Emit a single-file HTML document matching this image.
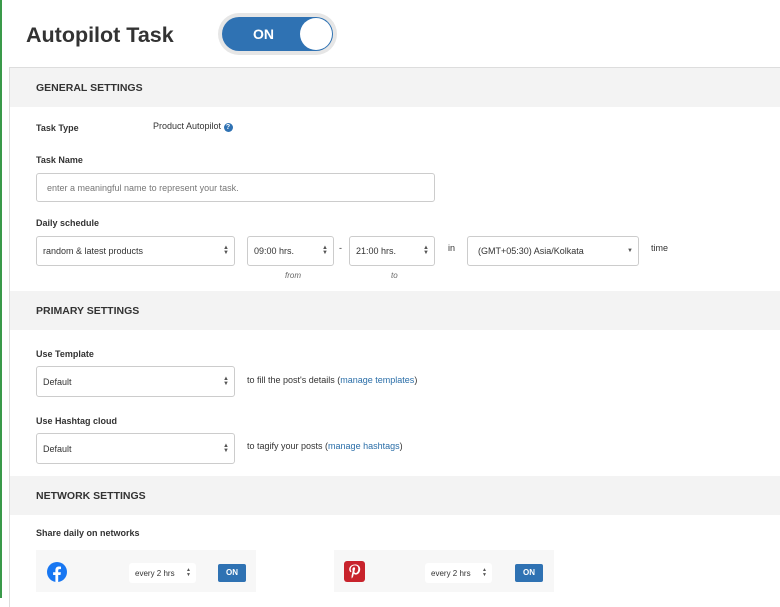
<!DOCTYPE html>
<html><head><style>
*{margin:0;padding:0;box-sizing:border-box}
body{width:780px;height:598px;background:#fff;font-family:"Liberation Sans",sans-serif;color:#333;position:relative;overflow:hidden}
.a{position:absolute}
.green{left:0;top:0;width:2px;height:598px;background:#3a9a4a}
h1{position:absolute;left:26px;top:23px;font-size:21.5px;font-weight:bold;color:#333}
.tog{left:218px;top:13px;width:119px;height:42px;border-radius:21px;background:#e6e6e6}
.tog .in{position:absolute;left:4px;top:4px;width:111px;height:34px;border-radius:17px;background:#2f72b3}
.tog .k{position:absolute;right:1px;top:1px;width:32px;height:32px;border-radius:16px;background:#fff}
.tog span{position:absolute;left:31px;top:9px;color:#fff;font-weight:bold;font-size:14px}
.panel{left:9px;top:67px;width:780px;height:540px;border-left:1px solid #ddd;border-top:1px solid #ddd}
.sh{left:10px;width:770px;height:39px;background:#f3f3f3;font-size:10.5px;font-weight:bold;color:#333;padding:14px 0 0 26px}
.lb{font-size:9px;font-weight:bold;color:#333}
.tx{font-size:9px;color:#333}
.box{border:1px solid #ccc;border-radius:3px;background:#fff;font-size:9px;color:#333;padding-left:6px;display:flex;align-items:center}
.box .ar{position:absolute;right:5px;top:50%;margin-top:-5px;font-size:6px;line-height:5px;color:#555}
a{color:#2a6ea8;text-decoration:none}
.it{font-size:8px;font-style:italic;color:#666}
.net{height:42px;background:#f7f7f7}
.on{background:#2f72b3;color:#fff;font-size:8px;font-weight:bold;border-radius:2px;text-align:center;line-height:18px;width:28px;height:18px}
</style></head><body>
<div class="a green"></div>
<h1>Autopilot Task</h1>
<div class="a tog"><div class="in"><span>ON</span><div class="k"></div></div></div>
<div class="a panel"></div>
<div class="a sh" style="top:68px">GENERAL SETTINGS</div>
<div class="a lb" style="left:36px;top:123px">Task Type</div>
<div class="a tx" style="left:153px;top:121px">Product Autopilot <span style="display:inline-block;width:9px;height:9px;border-radius:50%;background:#2f72b3;color:#fff;font-size:7px;text-align:center;line-height:9px;font-weight:bold">?</span></div>
<div class="a lb" style="left:36px;top:155px">Task Name</div>
<div class="a box" style="left:36px;top:173px;width:399px;height:29px;color:#777;padding-left:10px">enter a meaningful name to represent your task.</div>
<div class="a lb" style="left:36px;top:218px">Daily schedule</div>
<div class="a box" style="left:36px;top:236px;width:199px;height:30px">random &amp; latest products<div class="ar">▲<br>▼</div></div>
<div class="a box" style="left:247px;top:236px;width:87px;height:30px">09:00 hrs.<div class="ar">▲<br>▼</div></div>
<div class="a tx" style="left:339px;top:243px">-</div>
<div class="a box" style="left:349px;top:236px;width:86px;height:30px">21:00 hrs.<div class="ar">▲<br>▼</div></div>
<div class="a tx" style="left:448px;top:243px">in</div>
<div class="a box" style="left:467px;top:236px;width:172px;height:30px;padding-left:10px">(GMT+05:30) Asia/Kolkata<div class="ar" style="margin-top:-2px">▼</div></div>
<div class="a tx" style="left:651px;top:243px">time</div>
<div class="a it" style="left:285px;top:271px">from</div>
<div class="a it" style="left:391px;top:271px">to</div>
<div class="a sh" style="top:291px">PRIMARY SETTINGS</div>
<div class="a lb" style="left:36px;top:349px">Use Template</div>
<div class="a box" style="left:36px;top:366px;width:199px;height:31px">Default<div class="ar">▲<br>▼</div></div>
<div class="a tx" style="left:247px;top:375px">to fill the post's details (<a>manage templates</a>)</div>
<div class="a lb" style="left:36px;top:416px">Use Hashtag cloud</div>
<div class="a box" style="left:36px;top:433px;width:199px;height:31px">Default<div class="ar">▲<br>▼</div></div>
<div class="a tx" style="left:247px;top:441px">to tagify your posts (<a>manage hashtags</a>)</div>
<div class="a sh" style="top:476px">NETWORK SETTINGS</div>
<div class="a lb" style="left:36px;top:528px">Share daily on networks</div>
<div class="a net" style="left:36px;top:550px;width:220px"></div>
<div class="a net" style="left:334px;top:550px;width:220px"></div>
<svg class="a" style="left:47px;top:562px" width="20" height="20" viewBox="0 0 20 20"><circle cx="10" cy="10" r="10" fill="#1877f2"/><path d="M11.2 20v-7h2.3l.4-2.8h-2.7V8.5c0-.8.3-1.4 1.4-1.4h1.4V4.6c-.3 0-1.1-.1-2.1-.1-2.1 0-3.5 1.3-3.5 3.6v2.1H6.1V13h2.3v7z" fill="#fff"/></svg>
<div class="a" style="left:344px;top:561px;width:21px;height:21px;border-radius:3px;background:#c8232c"><svg width="21" height="21" viewBox="0 0 21 21"><path d="M10.8 3.5c-3.8 0-5.6 2.6-5.6 4.8 0 1.3.5 2.5 1.6 2.9.2.1.3 0 .4-.2l.1-.6c.1-.2 0-.3-.1-.5-.3-.4-.5-.9-.5-1.600 0-2.100 1.600-3.900 4.100-3.900 2.200 0 3.500 1.400 3.500 3.200 0 2.400-1.100 4.400-2.600 4.400-.9 0-1.500-.7-1.300-1.600.2-1.100.7-2.200.7-2.900 0-.7-.4-1.200-1.100-1.200-.9 0-1.600.9-1.600 2.100 0 .8.3 1.300.3 1.300l-1 4.500c-.3 1.300 0 3 0 3.200h.2c.1-.1 1.100-1.400 1.400-2.700l.5-2.100c.3.500 1.100 1 2 1 2.600 0 4.400-2.400 4.400-5.600 0-2.400-2-4.600-5.200-4.600z" fill="#fff"/></svg></div>
<div class="a box" style="left:129px;top:563px;width:67px;height:20px;border:none;font-size:8px">every 2 hrs<div class="ar" style="font-size:5px">▲<br>▼</div></div>
<div class="a box" style="left:425px;top:563px;width:67px;height:20px;border:none;font-size:8px">every 2 hrs<div class="ar" style="font-size:5px">▲<br>▼</div></div>
<div class="a on" style="left:218px;top:564px">ON</div>
<div class="a on" style="left:515px;top:564px">ON</div>
</body></html>
